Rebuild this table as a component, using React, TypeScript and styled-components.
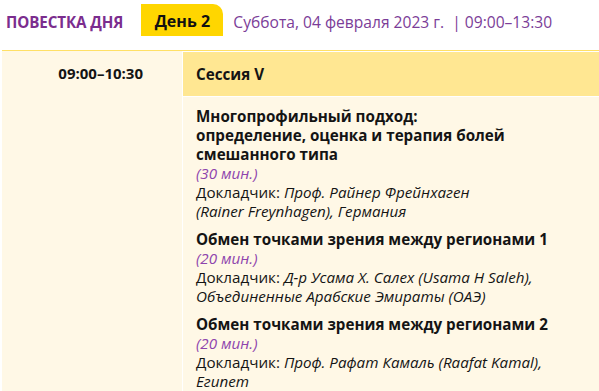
import React from "react";
import styled, { createGlobalStyle } from "styled-components";

const Global = createGlobalStyle`
  html, body { margin: 0; padding: 0; background: #ffffff; }
  body { font-family: "Open Sans", "Noto Sans", sans-serif; color: #141414; }
`;

const Page = styled.div`
  width: 599px;
  height: 391px;
  overflow: hidden;
  background: #ffffff;
`;

const Header = styled.div`
  display: flex;
  align-items: flex-end;
  height: 36px;
  padding-left: 6px;
`;

const Title = styled.div`
  font-weight: 700;
  font-size: 15.2px;
  color: #7b2d8e;
  letter-spacing: -0.1px;
  line-height: 27px;
`;

const Tab = styled.div`
  margin-left: 18px;
  width: 82px;
  height: 32px;
  background: #ffd600;
  border-radius: 0 10px 0 0;
  display: flex;
  align-items: center;
  justify-content: center;
  padding-top: 1px;
  box-sizing: border-box;
  font-weight: 700;
  font-size: 16px;
  color: #111;
`;

const DateText = styled.div`
  margin-left: 10px;
  font-size: 15.6px;
  color: #7b3d98;
  line-height: 28px;
  white-space: pre;
`;

const Table = styled.div`
  margin: 14px 0 0 2px;
  border-top: 1px solid #ffe066;
  display: grid;
  grid-template-columns: 180px 1fr;
  grid-template-rows: 45px auto;
  column-gap: 1px;
  row-gap: 1px;
`;

const TimeCell = styled.div`
  grid-row: 1 / span 2;
  background: #fff8e6;
  display: flex;
  justify-content: flex-end;
  padding-right: 39px;
  height: 400px;
`;

const TimeText = styled.div`
  font-weight: 700;
  font-size: 15px;
  line-height: 45px;
`;

const SessionCell = styled.div`
  margin-top: 1px;
  background: #ffe792;
  font-weight: 700;
  font-size: 15.2px;
  line-height: 44px;
  padding-left: 13px;
`;

const ContentCell = styled.div`
  background: #fff8e6;
  padding: 10px 13px 0 13px;
  display: flex;
  flex-direction: column;
  gap: 9px;
  height: 400px;
`;

const Item = styled.div`
  font-size: 15.2px;
  line-height: 19px;
`;

const ItemTitle = styled.div`
  font-weight: 700;
`;

const Duration = styled.div`
  font-style: italic;
  color: #8e44ad;
`;

const Speaker = styled.div``;

const Em = styled.span`
  font-style: italic;
`;

const items = [
  {
    title: (
      <>
        Многопрофильный подход:
        <br />
        определение, оценка и терапия болей
        <br />
        смешанного типа
      </>
    ),
    dur: "(30 мин.)",
    speaker: (
      <>
        <Em>Проф. Райнер Фрейнхаген</Em>
        <br />
        <Em>(Rainer Freynhagen), Германия</Em>
      </>
    ),
  },
  {
    title: <>Обмен точками зрения между регионами 1</>,
    dur: "(20 мин.)",
    speaker: (
      <>
        <Em>Д-р Усама Х. Салех (Usama H Saleh),</Em>
        <br />
        <Em>Объединенные Арабские Эмираты (ОАЭ)</Em>
      </>
    ),
  },
  {
    title: <>Обмен точками зрения между регионами 2</>,
    dur: "(20 мин.)",
    speaker: (
      <>
        <Em>Проф. Рафат Камаль (Raafat Kamal),</Em>
        <br />
        <Em>Египет</Em>
      </>
    ),
  },
];

export default function App() {
  return (
    <Page>
      <Global />
      <Header>
        <Title>ПОВЕСТКА ДНЯ</Title>
        <Tab>День 2</Tab>
        <DateText>Суббота, 04 февраля 2023 г.  | 09:00–13:30</DateText>
      </Header>
      <Table>
        <TimeCell>
          <TimeText>09:00–10:30</TimeText>
        </TimeCell>
        <SessionCell>Сессия V</SessionCell>
        <ContentCell>
          {items.map((it, i) => (
            <Item key={i}>
              <ItemTitle>{it.title}</ItemTitle>
              <Duration>{it.dur}</Duration>
              <Speaker>
                Докладчик: {it.speaker}
              </Speaker>
            </Item>
          ))}
        </ContentCell>
      </Table>
    </Page>
  );
}
